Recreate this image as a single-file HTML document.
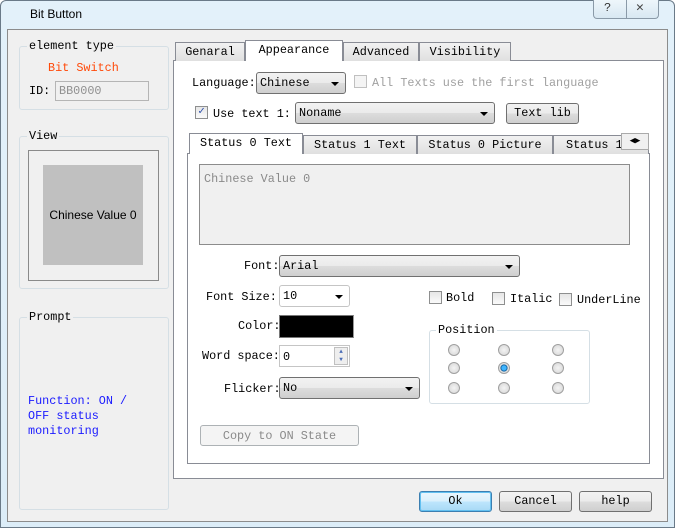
<!DOCTYPE html>
<html><head><style>
*{box-sizing:border-box;margin:0;padding:0}
body{width:675px;height:528px;overflow:hidden;background:#fff;font-family:"Liberation Mono",monospace;font-size:11.8px;color:#000;position:relative}
.a{position:absolute;white-space:nowrap}
.grp{position:absolute;border:1px solid #d5dfe5;border-radius:3px}
.lg{position:absolute;background:#f0f0f0;padding:0 2px;top:-8px;left:7px}
.btn{position:absolute;border:1px solid #707070;border-radius:3px;background:linear-gradient(#f2f2f2,#ebebeb 50%,#dddddd 50%,#cfcfcf);text-align:center;line-height:19px}
.cb{position:absolute;border:1px solid #8e8f8f;background:linear-gradient(#e6e6e6,#fafafa);width:13px;height:13px}
.sel{position:absolute;border:1px solid #707070;border-radius:3px;background:linear-gradient(#f2f2f2,#ebebeb 50%,#dddddd 50%,#cfcfcf);line-height:20px;padding-left:3px}
.sel:after{content:"";position:absolute;right:6px;top:9px;border:4px solid transparent;border-top:4px solid #000;border-bottom:0}
.tab{position:absolute;border:1px solid #898c95;border-bottom:none;background:linear-gradient(#f2f2f2,#e0e0e0);text-align:center;line-height:19px}
.rd{position:absolute;width:12px;height:12px;border-radius:50%;border:1px solid #a0a0a0;background:radial-gradient(#f4f4f4,#d4d4d4)}
</style></head><body>
<div class="a" style="left:0;top:0;width:675px;height:528px;background:linear-gradient(#e3f1fa,#dcedf8);border:1px solid #6a7a88;border-radius:6px 6px 0 0"></div>
<div class="a" style="left:30px;top:7px;font-family:'Liberation Sans',sans-serif;font-size:12px">Bit Button</div>
<div class="a" style="left:593px;top:0;width:66px;height:19px;border:1px solid #8a9aa8;border-top:none;border-radius:0 0 4px 4px;background:linear-gradient(#eef6fb,#d8e8f2)"></div>
<div class="a" style="left:626px;top:0;width:1px;height:19px;background:#8a9aa8"></div>
<div class="a" style="left:604px;top:1px;font-size:12px;color:#333">?</div>
<div class="a" style="left:636px;top:0;font-size:13px;color:#444">✕</div>
<div class="a" style="left:7px;top:29px;width:661px;height:493px;background:#f0f0f0;border:1px solid #8c8c8c"></div>

<div class="grp" style="left:19px;top:46px;width:150px;height:64px"><span class="lg">element type</span></div>
<div class="a" style="left:48px;top:61px;color:#ff4a0a">Bit Switch</div>
<div class="a" style="left:29px;top:84px">ID:</div>
<div class="a" style="left:55px;top:81px;width:94px;height:20px;border:1px solid #b5b5b5;color:#909090;padding:2px 3px">BB0000</div>

<div class="grp" style="left:19px;top:136px;width:150px;height:153px"><span class="lg">View</span></div>
<div class="a" style="left:28px;top:150px;width:131px;height:131px;border:1px solid #8a8a8a;background:#f0f0f0"></div>
<div class="a" style="left:43px;top:165px;width:100px;height:100px;background:#c0c0c0;font-family:'Liberation Sans',sans-serif;font-size:12px;line-height:100px;text-align:center">Chinese Value 0</div>

<div class="grp" style="left:19px;top:317px;width:150px;height:193px"><span class="lg">Prompt</span></div>
<div class="a" style="left:28px;top:394px;color:#1a1aff;line-height:15px;white-space:pre">Function: ON /
OFF status
monitoring</div>

<div class="a" style="left:173px;top:60px;width:491px;height:419px;border:1px solid #898c95;background:#fff"></div>
<div class="tab" style="left:175px;top:42px;width:70px;height:19px">Genaral</div>
<div class="tab" style="left:245px;top:40px;width:98px;height:21px;background:#fff;border-color:#898c95">Appearance</div>
<div class="tab" style="left:343px;top:42px;width:76px;height:19px">Advanced</div>
<div class="tab" style="left:419px;top:42px;width:92px;height:19px">Visibility</div>

<div class="a" style="left:192px;top:76px">Language:</div>
<div class="sel" style="left:256px;top:72px;width:90px;height:22px">Chinese</div>
<div class="cb" style="left:354px;top:75px;border-color:#c0c0c0;background:#f4f4f4"></div>
<div class="a" style="left:372px;top:76px;color:#a0a0a0">All Texts use the first language</div>
<div class="cb" style="left:195px;top:106px;text-align:center;line-height:11px;color:#2a4dab;font-size:11px">✓</div>
<div class="a" style="left:213px;top:107px">Use text 1:</div>
<div class="sel" style="left:295px;top:102px;width:200px;height:22px">Noname</div>
<div class="btn" style="left:506px;top:103px;width:73px;height:21px">Text lib</div>

<div class="a" style="left:187px;top:153px;width:463px;height:311px;border:1px solid #898c95;background:#fff"></div>
<div class="tab" style="left:189px;top:133px;width:114px;height:21px;background:#fff">Status 0 Text</div>
<div class="tab" style="left:303px;top:135px;width:114px;height:19px">Status 1 Text</div>
<div class="tab" style="left:417px;top:135px;width:136px;height:19px">Status 0 Picture</div>
<div class="tab" style="left:553px;top:135px;width:96px;height:19px;text-align:left;padding-left:12px;overflow:hidden">Status 1 Pic</div>
<div class="a" style="left:621px;top:133px;width:28px;height:17px;background:#f0f0f0;border:1px solid #aaa;font-size:9px;line-height:15px;text-align:center">◀▶</div>
<div class="a" style="left:199px;top:164px;width:431px;height:81px;border:1px solid #8c8c8c;background:#f0f0f0;color:#8a8a8a;padding:7px 4px">Chinese Value 0</div>

<div class="a" style="left:244px;top:259px">Font:</div>
<div class="sel" style="left:279px;top:255px;width:241px;height:22px">Arial</div>
<div class="a" style="left:206px;top:290px">Font Size:</div>
<div class="sel" style="left:279px;top:285px;width:71px;height:22px;background:#fff;border-color:#c5c5c5">10</div>
<div class="cb" style="left:429px;top:291px"></div><div class="a" style="left:446px;top:291px">Bold</div>
<div class="cb" style="left:492px;top:292px"></div><div class="a" style="left:510px;top:292px">Italic</div>
<div class="cb" style="left:559px;top:293px"></div><div class="a" style="left:577px;top:293px">UnderLine</div>
<div class="a" style="left:238px;top:319px">Color:</div>
<div class="a" style="left:279px;top:315px;width:75px;height:23px;background:#000;border:1px solid #777;border-right-color:#999"></div>
<div class="a" style="left:202px;top:349px">Word space:</div>
<div class="a" style="left:279px;top:345px;width:71px;height:22px;border:1px solid #c5c5c5;background:#fff;padding:4px 3px">0</div>
<div class="a" style="left:334px;top:347px;width:14px;height:18px;border:1px solid #c0c0c0;background:#eee;font-size:6px;color:#4a6cb5;line-height:8px;text-align:center">▲<br>▼</div>
<div class="a" style="left:224px;top:382px">Flicker:</div>
<div class="sel" style="left:279px;top:377px;width:141px;height:22px">No</div>

<div class="grp" style="left:429px;top:330px;width:161px;height:74px;border-color:#d5dfe5"><span class="lg" style="background:#fff;left:6px">Position</span></div>
<div class="rd" style="left:448px;top:344px"></div><div class="rd" style="left:498px;top:344px"></div><div class="rd" style="left:552px;top:344px"></div>
<div class="rd" style="left:448px;top:362px"></div><div class="rd" style="left:498px;top:362px;background:radial-gradient(#3fb5ff 30%,#0b5a99 45%,#e0e0e0 55%)"></div><div class="rd" style="left:552px;top:362px"></div>
<div class="rd" style="left:448px;top:382px"></div><div class="rd" style="left:498px;top:382px"></div><div class="rd" style="left:552px;top:382px"></div>
<div class="a" style="left:200px;top:425px;width:159px;height:21px;border:1px solid #adb2b5;border-radius:3px;background:#f4f4f4;color:#8a8a8a;text-align:center;line-height:20px">Copy to ON State</div>

<div class="btn" style="left:419px;top:491px;width:73px;height:21px;border-color:#3c7fb1;background:linear-gradient(#eaf6fd,#d9f0fc 50%,#bee6fd 50%,#a7d9f5);box-shadow:inset 0 0 0 1px #62c0f0">Ok</div>
<div class="btn" style="left:499px;top:491px;width:73px;height:21px">Cancel</div>
<div class="btn" style="left:579px;top:491px;width:73px;height:21px">help</div>
</body></html>
